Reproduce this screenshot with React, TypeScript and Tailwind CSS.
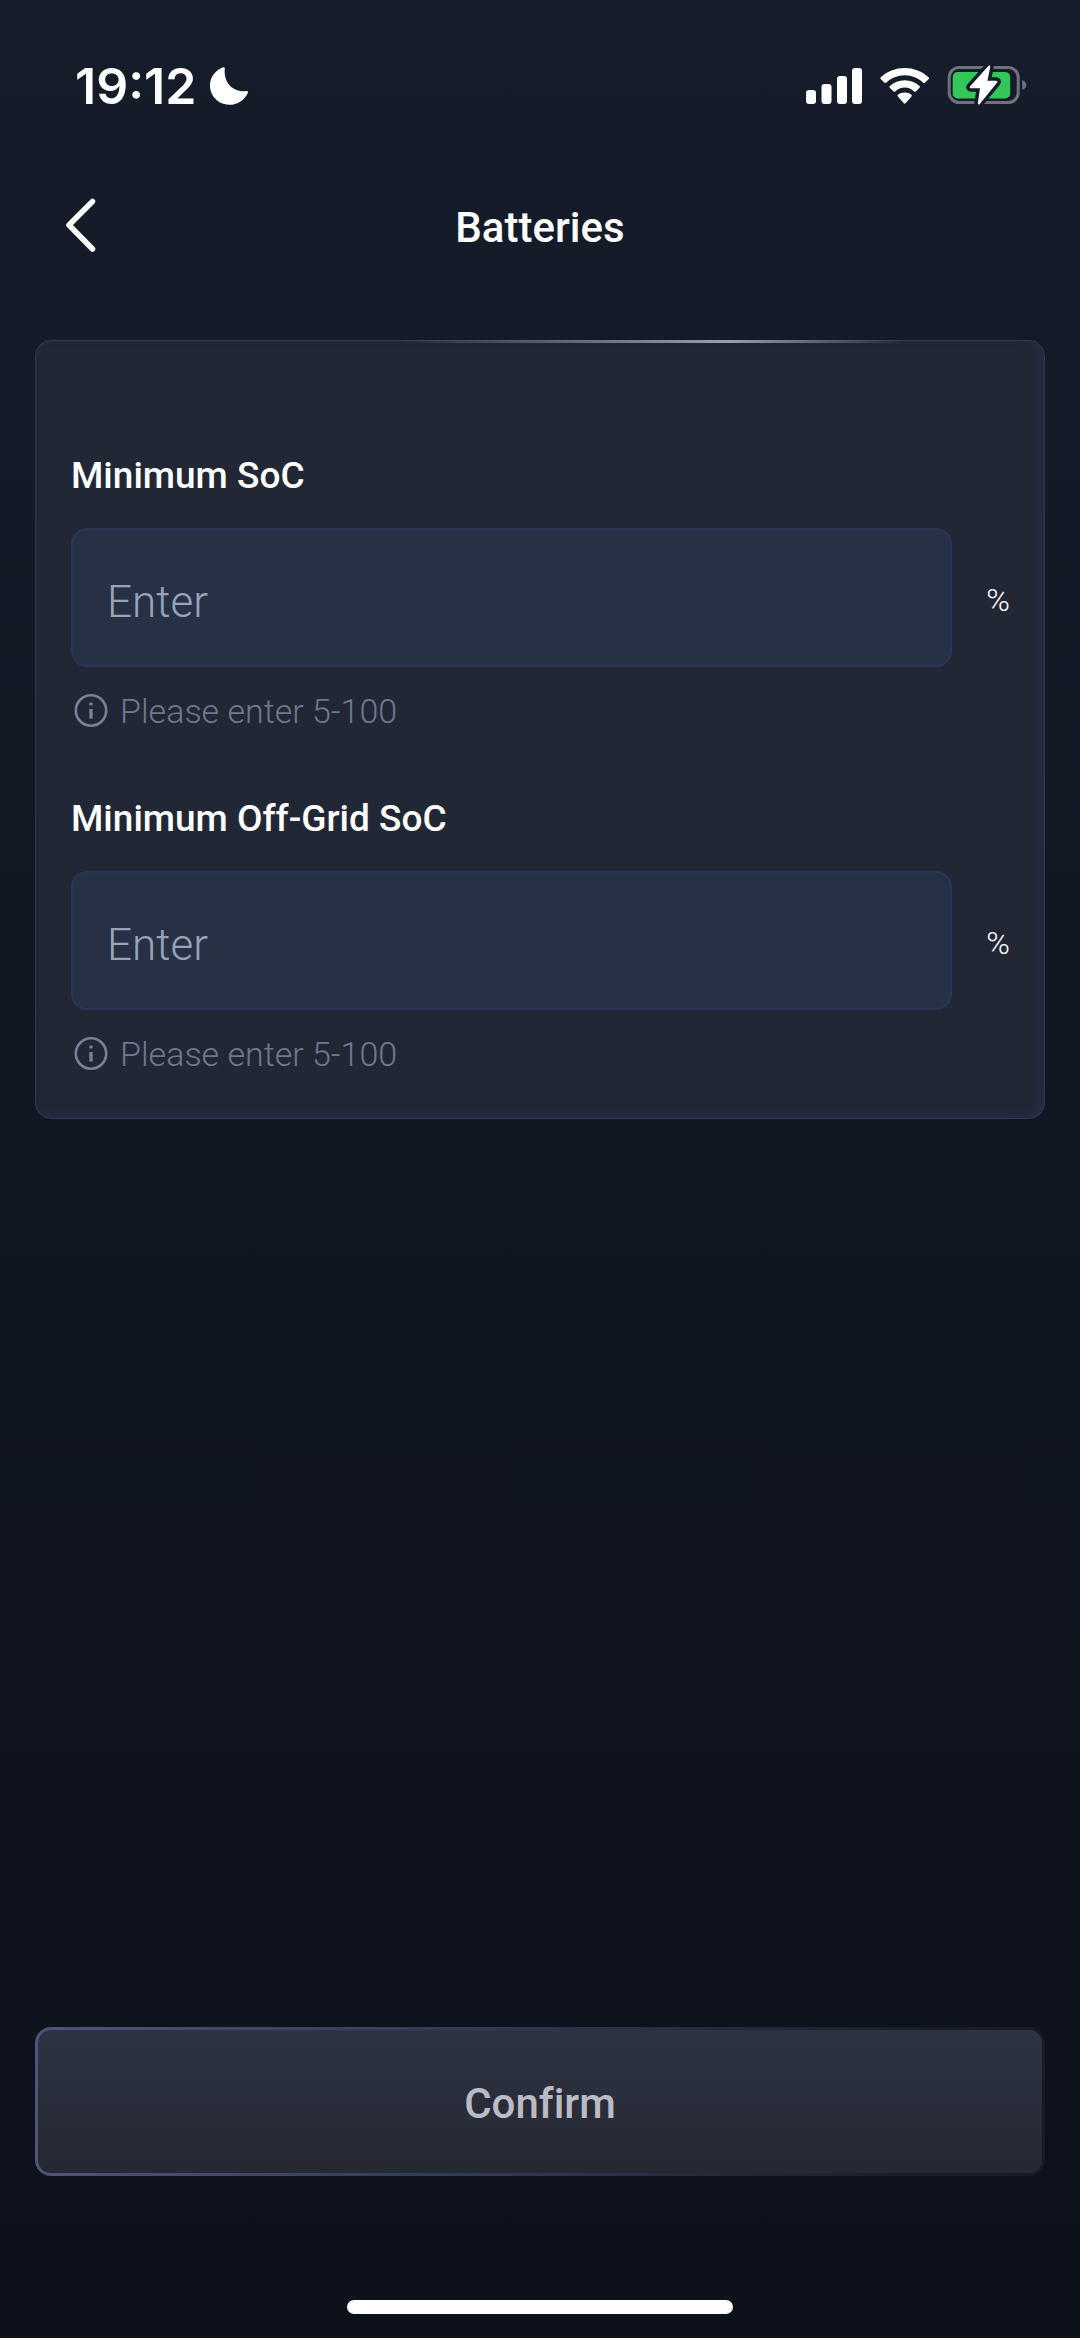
import { useState } from 'react'

const fields = [
  { id: 'min-soc', label: 'Minimum SoC', hint: 'Please enter 5-100' },
  { id: 'min-off-grid-soc', label: 'Minimum Off-Grid SoC', hint: 'Please enter 5-100' },
]

function MoonIcon() {
  return (
    <svg width="42" height="42" viewBox="0 0 42 42" fill="#fff" aria-hidden="true">
      <path d="M14.6 2.6C15.8 1.9 17 2.6 16.8 4C15.4 16.5 24 26.8 36.6 26.3L38.6 26C39.8 25.9 40.3 26.8 39.8 27.9C36.6 35 29.6 39.8 21.2 39.8C10.6 39.8 2 31.2 2 20.6C2 12.7 6.9 5.6 14.6 2.6Z" />
    </svg>
  )
}

function SignalIcon() {
  return (
    <svg width="57" height="40" viewBox="0 0 57 40" fill="#fff" aria-hidden="true">
      <rect x="0" y="24" width="10" height="14" rx="3" />
      <rect x="15.5" y="18" width="10" height="20" rx="3" />
      <rect x="31" y="10" width="10" height="28" rx="3" />
      <rect x="46" y="2" width="10" height="36" rx="3" />
    </svg>
  )
}

function WifiIcon() {
  return (
    <svg width="52" height="40" viewBox="0 0 52 40" fill="#fff" aria-hidden="true">
      <path d="M25.7 2C34.8 2 43.2 5.4 49.6 11.2C50.2 11.7 50.2 12.4 49.7 12.9L45.9 16.7C45.4 17.2 44.7 17.2 44.2 16.7C39.2 12.1 32.8 9.3 25.7 9.3C18.6 9.3 12.2 12.1 7.2 16.7C6.7 17.2 6 17.2 5.5 16.7L1.7 12.9C1.2 12.4 1.2 11.7 1.8 11.2C8.2 5.4 16.6 2 25.7 2Z" />
      <path d="M25.7 14.2C31.3 14.2 36.5 16.4 40.5 19.9C41.1 20.4 41.1 21.2 40.6 21.7L36.8 25.4C36.3 25.9 35.6 25.9 35.1 25.4C32.6 23.1 29.3 21.6 25.7 21.6C22.1 21.6 18.8 23.1 16.3 25.4C15.8 25.9 15.1 25.9 14.6 25.4L10.8 21.7C10.3 21.2 10.3 20.4 10.9 19.9C14.9 16.4 20.1 14.2 25.7 14.2Z" />
      <path d="M25.7 26.4C28.2 26.4 30.6 27.3 32.4 28.7C33 29.2 33 29.9 32.5 30.4L26.6 37.3C26.1 37.9 25.3 37.9 24.8 37.3L18.9 30.4C18.4 29.9 18.4 29.2 19 28.7C20.8 27.3 23.2 26.4 25.7 26.4Z" />
    </svg>
  )
}

function BatteryIcon() {
  const bolt = 'M42.3 2.5L23.7 23.2H34.2L31.8 39.5L49.4 17.8H39.2Z'
  return (
    <svg width="82" height="44" viewBox="0 0 82 44" aria-hidden="true">
      <rect x="2.2" y="3.5" width="69" height="35" rx="10" fill="none" stroke="#6f727e" strokeWidth="3" />
      <path d="M75.2 16C77.8 17 79.4 18.7 79.4 21C79.4 23.3 77.8 25 75.2 26Z" fill="#6f727e" />
      <rect x="5.7" y="8" width="57.5" height="26.5" rx="5" fill="#32c759" />
      <path d={bolt} fill="#151c29" stroke="#151c29" strokeWidth="9" strokeLinejoin="round" />
      <path d={bolt} fill="#fff" stroke="#fff" strokeWidth="2" strokeLinejoin="round" />
    </svg>
  )
}

function InfoIcon() {
  return (
    <svg width="34" height="34" viewBox="0 0 34 34" fill="none" stroke="#7c7f95" aria-hidden="true">
      <circle cx="17" cy="16.5" r="15.2" strokeWidth="2.6" />
      <path d="M17 8.6V11.4" strokeWidth="3.4" />
      <path d="M17 15V24.6" strokeWidth="3.4" />
    </svg>
  )
}

export default function App() {
  const [values, setValues] = useState<Record<string, string>>({})
  const ready = fields.every((f) => values[f.id])

  return (
    <div className="flex min-h-screen w-full flex-col bg-linear-to-b from-[#161d2a] via-[#101622] to-[#0d111b] font-['Roboto',sans-serif] text-white">
      {/* Status bar */}
      <div className="flex h-[172px] items-center justify-between pr-[51px] pl-[75px]">
        <div className="flex items-center gap-3">
          <span className="font-['Inter',sans-serif] text-[50px] leading-none font-semibold">19:12</span>
          <MoonIcon />
        </div>
        <div className="flex items-center gap-4">
          <SignalIcon />
          <WifiIcon />
          <BatteryIcon />
        </div>
      </div>

      {/* Header */}
      <header className="grid h-[112px] grid-cols-[100px_1fr_100px] items-center">
        <button type="button" aria-label="Back" className="flex justify-end pb-1.5">
          <svg width="40" height="60" viewBox="0 0 40 60" fill="none" stroke="#fff" strokeWidth="5.5" strokeLinecap="round" strokeLinejoin="round">
            <path d="M32.5 6.5L9 30L32.5 54" />
          </svg>
        </button>
        <h1 className="text-center text-[42px] leading-[60px] font-medium">Batteries</h1>
      </header>

      {/* Settings card */}
      <main className="relative mx-[35px] mt-14 flex flex-col gap-[52px] rounded-2xl border border-[#323859] bg-[#222736] pt-[103px] pb-10 pl-[35px] shadow-[inset_-6px_-4px_14px_-6px_#2a3150]">
        <div className="absolute -top-px left-[36%] h-[3px] w-1/2 bg-linear-to-r from-transparent via-[#9b9cab] via-65% to-transparent" />
        {fields.map((f) => (
          <div key={f.id}>
            <label htmlFor={f.id} className="block text-[37px] leading-[64px] font-medium">
              {f.label}
            </label>
            <div className="mt-5 flex items-center">
              <input
                id={f.id}
                inputMode="numeric"
                placeholder="Enter"
                value={values[f.id] ?? ''}
                onChange={(e) => setValues({ ...values, [f.id]: e.target.value })}
                className="h-[139px] min-w-0 flex-1 rounded-2xl border-2 border-[#2b3555] bg-[#273145] px-[34px] pt-2 text-[44px] font-light outline-none placeholder:text-[#98a3b8]"
              />
              <span className="w-[92px] pt-1 text-center text-[32px] font-light">%</span>
            </div>
            <div className="mt-5 flex h-12 items-center gap-3 pl-[3px]">
              <InfoIcon />
              <p className="text-[34px] leading-[48px] font-light text-[#73778d]">{f.hint}</p>
            </div>
          </div>
        ))}
      </main>

      {/* Footer */}
      <footer className="mt-auto flex flex-col items-center px-[35px] pt-10 pb-6">
        <button
          type="submit"
          disabled={!ready}
          className="h-[149px] w-full rounded-2xl border-3 border-transparent pt-1 text-[42px] font-medium text-[#b9bcc5] [background:linear-gradient(to_bottom,#2d3344,#262832)_padding-box,linear-gradient(to_right,#4c5678,#1a1f2f_85%,#171b28)_border-box] [font-variant-ligatures:none]"
        >
          Confirm
        </button>
        <div className="mt-[124px] h-[14px] w-[386px] rounded-full bg-white" />
      </footer>
    </div>
  )
}
